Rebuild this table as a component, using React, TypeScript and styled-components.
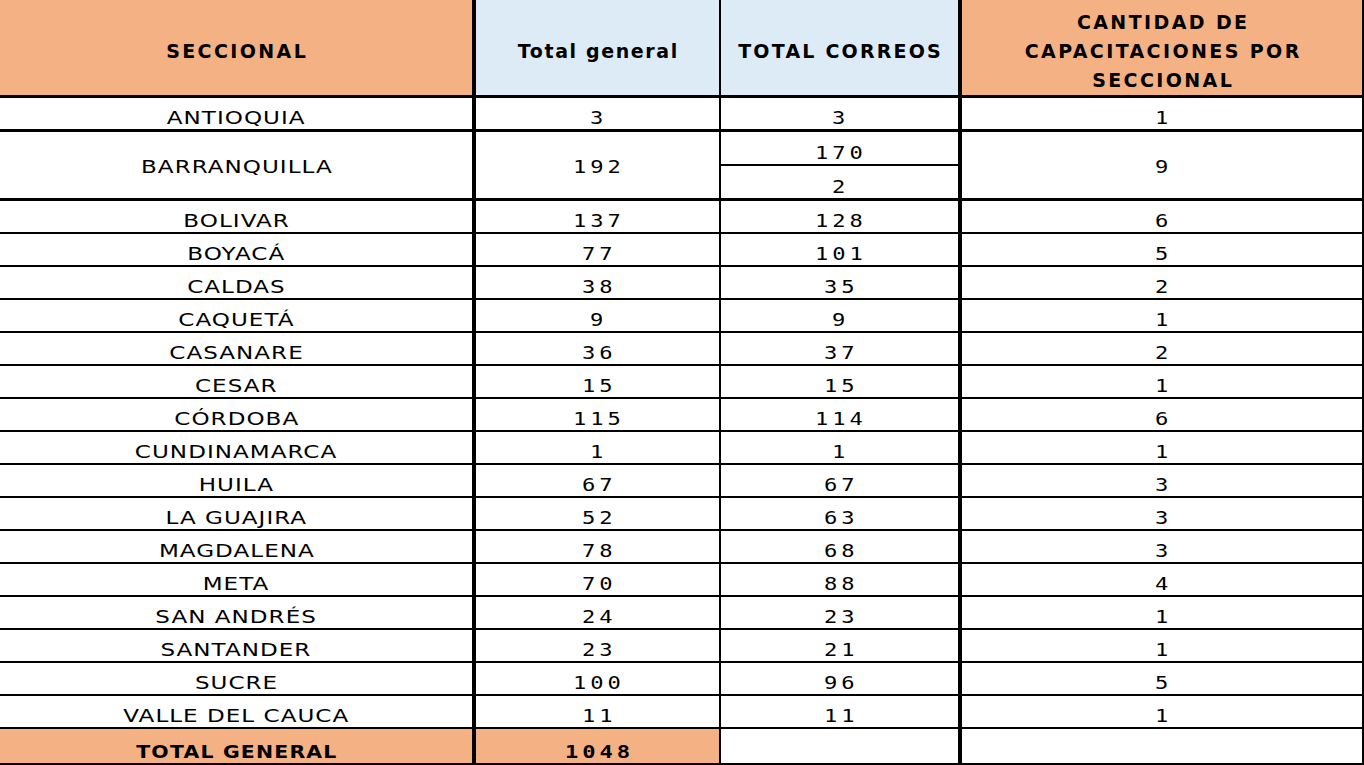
import { FC } from 'react'
import styled, { createGlobalStyle } from 'styled-components'

const GlobalStyle = createGlobalStyle`
  html, body {
    margin: 0;
    padding: 0;
    background: #ffffff;
  }
  * {
    box-sizing: border-box;
  }
`

type Tone = 'orange' | 'blue' | 'white'

interface DataRow {
  name: string
  total: string
  correos: string[]
  capacitaciones: string
}

const rows: DataRow[] = [
  { name: 'ANTIOQUIA', total: '3', correos: ['3'], capacitaciones: '1' },
  { name: 'BARRANQUILLA', total: '192', correos: ['170', '2'], capacitaciones: '9' },
  { name: 'BOLIVAR', total: '137', correos: ['128'], capacitaciones: '6' },
  { name: 'BOYACÁ', total: '77', correos: ['101'], capacitaciones: '5' },
  { name: 'CALDAS', total: '38', correos: ['35'], capacitaciones: '2' },
  { name: 'CAQUETÁ', total: '9', correos: ['9'], capacitaciones: '1' },
  { name: 'CASANARE', total: '36', correos: ['37'], capacitaciones: '2' },
  { name: 'CESAR', total: '15', correos: ['15'], capacitaciones: '1' },
  { name: 'CÓRDOBA', total: '115', correos: ['114'], capacitaciones: '6' },
  { name: 'CUNDINAMARCA', total: '1', correos: ['1'], capacitaciones: '1' },
  { name: 'HUILA', total: '67', correos: ['67'], capacitaciones: '3' },
  { name: 'LA GUAJIRA', total: '52', correos: ['63'], capacitaciones: '3' },
  { name: 'MAGDALENA', total: '78', correos: ['68'], capacitaciones: '3' },
  { name: 'META', total: '70', correos: ['88'], capacitaciones: '4' },
  { name: 'SAN ANDRÉS', total: '24', correos: ['23'], capacitaciones: '1' },
  { name: 'SANTANDER', total: '23', correos: ['21'], capacitaciones: '1' },
  { name: 'SUCRE', total: '100', correos: ['96'], capacitaciones: '5' },
  { name: 'VALLE DEL CAUCA', total: '11', correos: ['11'], capacitaciones: '1' }
]

// row heights in the sheet, one entry per grid track
const rowHeights = (): string => {
  const tracks = ['98px', '34px', '34px', '35px']
  for (let i = 0; i < 16; i++) tracks.push('33px')
  tracks.push('36px')
  return tracks.join(' ')
}

const toneColor: Record<Tone, string> = {
  orange: '#f4b183',
  blue: '#ddebf7',
  white: '#ffffff'
}

// thick lines after SECCIONAL and after TOTAL CORREOS, thin elsewhere
const rightBorder = [4, 2, 4, 2]

const App: FC = () => {
  let gridRow = 2
  const totalRow = 2 + rows.length + 1

  return (
    <>
      <GlobalStyle />
      <Sheet>
        <Cell $tone="orange" $row={1} $col={1} $bottom={3} $header>
          <HeaderLabel>SECCIONAL</HeaderLabel>
        </Cell>
        <Cell $tone="blue" $row={1} $col={2} $bottom={3} $header>
          <HeaderLabel $spacing={1.6}>Total general</HeaderLabel>
        </Cell>
        <Cell $tone="blue" $row={1} $col={3} $bottom={3} $header>
          <HeaderLabel $spacing={2.2}>TOTAL CORREOS</HeaderLabel>
        </Cell>
        <Cell $tone="orange" $row={1} $col={4} $bottom={3} $header>
          <HeaderStack>
            <HeaderLabel>CANTIDAD DE</HeaderLabel>
            <HeaderLabel>CAPACITACIONES POR</HeaderLabel>
            <HeaderLabel>SECCIONAL</HeaderLabel>
          </HeaderStack>
        </Cell>

        {rows.map((row, index) => {
          const start = gridRow
          const span = row.correos.length
          const merged = span > 1
          const bottom = index < 2 ? 3 : 2
          gridRow += span
          return [
            <Cell key={`${row.name}-n`} $row={start} $col={1} $span={span} $bottom={bottom} $middle={merged}>
              <Label>{row.name}</Label>
            </Cell>,
            <Cell key={`${row.name}-t`} $row={start} $col={2} $span={span} $bottom={bottom} $middle={merged}>
              <Digits>{row.total}</Digits>
            </Cell>,
            ...row.correos.map((value, k) => (
              <Cell
                key={`${row.name}-c${k}`}
                $row={start + k}
                $col={3}
                $bottom={merged && k === 0 ? 2 : bottom}
              >
                <Digits>{value}</Digits>
              </Cell>
            )),
            <Cell key={`${row.name}-q`} $row={start} $col={4} $span={span} $bottom={bottom} $middle={merged}>
              <Digits>{row.capacitaciones}</Digits>
            </Cell>
          ]
        })}

        <Cell $tone="orange" $row={totalRow} $col={1} $bottom={2}>
          <TotalLabel>TOTAL GENERAL</TotalLabel>
        </Cell>
        <Cell $tone="orange" $row={totalRow} $col={2} $bottom={2}>
          <Digits $bold>1048</Digits>
        </Cell>
        <Cell $row={totalRow} $col={3} $bottom={2} />
        <Cell $row={totalRow} $col={4} $bottom={2} />
      </Sheet>
    </>
  )
}

const Sheet = styled.div`
  display: grid;
  grid-template-columns: 476px 245px 241px 402px;
  grid-template-rows: ${rowHeights()};
  width: 1364px;
  height: 765px;
  overflow: hidden;
  background: #ffffff;
`

interface CellProps {
  $tone?: Tone
  $row: number
  $col: number
  $span?: number
  $bottom: number
  $header?: boolean
  $middle?: boolean
}

const Cell = styled.div<CellProps>`
  display: flex;
  justify-content: center;
  align-items: ${({ $header, $middle }) => ($header || $middle ? 'center' : 'flex-end')};
  grid-column: ${({ $col }) => $col};
  grid-row: ${({ $row, $span }) => `${$row} / span ${$span ?? 1}`};
  background: ${({ $tone }) => toneColor[$tone ?? 'white']};
  border-right: ${({ $col }) => rightBorder[$col - 1]}px solid #000000;
  border-bottom: ${({ $bottom }) => $bottom}px solid #000000;
  padding: ${({ $header, $middle }) => ($header ? '7px 0 0' : $middle ? '4px 0 0' : '0 0 1px')};
  color: #000000;
  overflow: hidden;
  white-space: nowrap;
`

const HeaderStack = styled.div`
  display: flex;
  flex-direction: column;
  align-items: center;
`

const HeaderLabel = styled.span<{ $spacing?: number }>`
  display: block;
  font-family: 'DejaVu Sans', 'Liberation Sans', sans-serif;
  font-weight: 700;
  font-size: 19px;
  line-height: 29px;
  letter-spacing: ${({ $spacing }) => $spacing ?? 2.4}px;
  margin-right: -${({ $spacing }) => $spacing ?? 2.4}px;
`

const Label = styled.span`
  display: inline-block;
  font-family: 'DejaVu Sans', 'Liberation Sans', sans-serif;
  font-size: 18px;
  line-height: 20px;
  letter-spacing: 0.8px;
  margin-right: -0.8px;
  transform: scaleX(1.28);
`

const TotalLabel = styled.span`
  display: inline-block;
  font-family: 'DejaVu Sans', 'Liberation Sans', sans-serif;
  font-weight: 700;
  font-size: 17px;
  line-height: 20px;
  letter-spacing: 1px;
  margin-right: -1px;
  transform: scaleX(1.2);
`

const Digits = styled.span<{ $bold?: boolean }>`
  display: inline-block;
  font-family: 'DejaVu Sans Mono', 'Liberation Mono', monospace;
  font-weight: ${({ $bold }) => ($bold ? 700 : 400)};
  font-size: 17px;
  line-height: 20px;
  letter-spacing: 3px;
  margin-right: -3px;
  transform: scaleX(1.3);
`

export default App
